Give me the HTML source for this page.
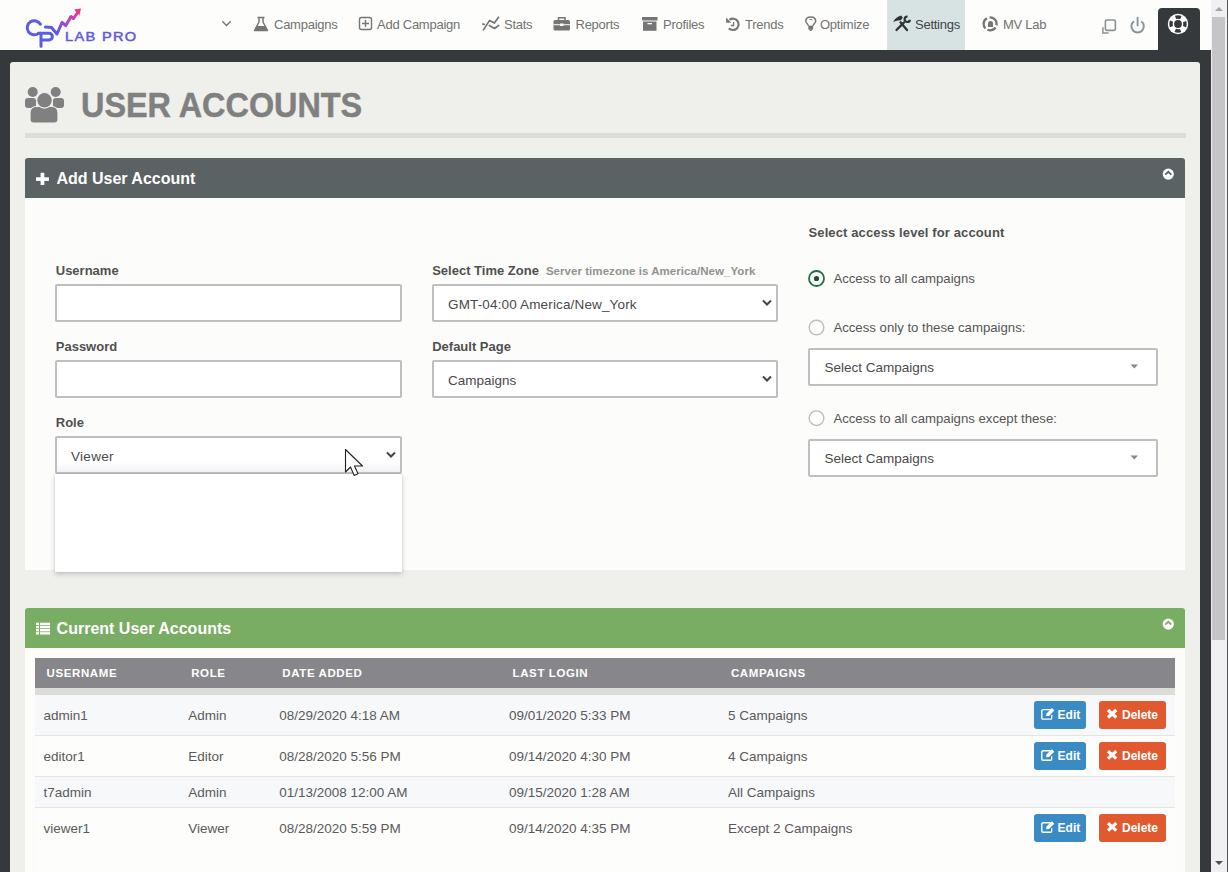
<!DOCTYPE html><html><head><meta charset="utf-8"><style>
*{box-sizing:border-box;margin:0;padding:0}
html,body{width:1228px;height:872px;overflow:hidden;background:#35393c;font-family:"Liberation Sans",sans-serif;position:relative}
.t{position:absolute;white-space:nowrap}
.b{position:absolute}
svg{position:absolute;overflow:visible}
</style></head><body>
<div class="b" style="left:0;top:0;width:1211px;height:50px;background:#fdfdfb"></div>
<div class="b" style="left:887px;top:0;width:78px;height:50px;background:#d7e3e3"></div>
<div class="b" style="left:1158px;top:8px;width:42px;height:50px;background:#35393c;border-radius:4px 4px 0 0"></div>
<div class="b" style="left:1211px;top:0;width:17px;height:872px;background:#f0f0f3;border-right:1px solid #5a5a5a"></div>
<div class="b" style="left:1212px;top:17px;width:13px;height:623px;background:#c5c5c7"></div>
<svg style="left:1210px;top:0" width="18" height="872"><path d="M5 11 L9 7 L13 11 Z" fill="#a3a3a3"/><path d="M5 861 L9 865 L13 861 Z" fill="#505050"/></svg>
<div class="b" style="left:10px;top:62px;width:1190px;height:830px;background:#eff0ec;border-radius:3px"></div>
<svg style="left:0;top:0" width="150" height="50">
<defs><linearGradient id="lg" x1="0" y1="1" x2="1" y2="0"><stop offset="0.25" stop-color="#5d5ae3"/><stop offset="0.55" stop-color="#a347d2"/><stop offset="1" stop-color="#f0368e"/></linearGradient></defs>
<path d="M40.4 24.3 A7.05 7.05 0 1 0 38.6 33.35" fill="none" stroke="#5d5ae3" stroke-width="3" stroke-linecap="round"/>
<path d="M38.6 33.2 L49 33.2 A3.4 3.4 0 0 1 49 40 L41 40 M41 33.2 L41 46.3" fill="none" stroke="#5d5ae3" stroke-width="3" stroke-linecap="round" stroke-linejoin="round"/>
<path d="M45.5 27 L51.5 27.5 L57 34 L62 22.5 L65.8 25.5 L71 16.5 L73.5 18.5 L78 12" fill="none" stroke="url(#lg)" stroke-width="3" stroke-linecap="round" stroke-linejoin="round"/>
<path d="M74 9.5 L81 8.5 L79.5 15.5 Z" fill="#f0368e"/>
</svg>
<div class="t " style="left:64.8px;top:29.10px;font-size:13px;line-height:16px;color:#5f5ae2;font-weight:normal;letter-spacing:1.2px;-webkit-text-stroke:0.5px #5f5ae2;transform:scaleX(1.12);transform-origin:0 0">LAB PRO</div>

<div class="t " style="left:274px;top:16.90px;font-size:13px;line-height:16px;color:#727272;font-weight:normal;letter-spacing:-0.25px">Campaigns</div>

<div class="t " style="left:377px;top:16.90px;font-size:13px;line-height:16px;color:#727272;font-weight:normal;letter-spacing:-0.25px">Add Campaign</div>

<div class="t " style="left:504px;top:16.90px;font-size:13px;line-height:16px;color:#727272;font-weight:normal;letter-spacing:-0.25px">Stats</div>

<div class="t " style="left:575.5px;top:16.90px;font-size:13px;line-height:16px;color:#727272;font-weight:normal;letter-spacing:-0.25px">Reports</div>

<div class="t " style="left:663px;top:16.90px;font-size:13px;line-height:16px;color:#727272;font-weight:normal;letter-spacing:-0.25px">Profiles</div>

<div class="t " style="left:745px;top:16.90px;font-size:13px;line-height:16px;color:#727272;font-weight:normal;letter-spacing:-0.25px">Trends</div>

<div class="t " style="left:820px;top:16.90px;font-size:13px;line-height:16px;color:#727272;font-weight:normal;letter-spacing:-0.25px">Optimize</div>

<div class="t " style="left:915px;top:16.90px;font-size:13px;line-height:16px;color:#3f4346;font-weight:normal;letter-spacing:-0.25px">Settings</div>

<div class="t " style="left:1003px;top:16.90px;font-size:13px;line-height:16px;color:#727272;font-weight:normal;letter-spacing:-0.25px">MV Lab</div>

<svg style="left:0;top:0" width="1210" height="50"><path d="M222.3 21.3 L226.5 25.5 L230.7 21.3" fill="none" stroke="#757575" stroke-width="1.4"/><path d="M257.5 17.5 L264.5 17.5 M259 17.5 L259 22 L254.5 30.5 L267.5 30.5 L263 22 L263 17.5" fill="none" stroke="#757575" stroke-width="1.5" stroke-linejoin="round"/><path d="M256.5 26 L265.5 26 L267.5 30.5 L254.5 30.5 Z" fill="#757575"/><rect x="359.5" y="17.5" width="12" height="12" rx="2" fill="none" stroke="#757575" stroke-width="1.4"/><path d="M365.5 20 L365.5 27 M362 23.5 L369 23.5" stroke="#757575" stroke-width="1.4"/><path d="M483.4 29.9 L489.6 20.4 L494.4 23 L498.5 17.2 M489.3 25.5 L494.5 28.5 L498.6 25.5 M482.8 24 L484.2 24.3" fill="none" stroke="#757575" stroke-width="1.7" stroke-linecap="round" stroke-linejoin="round"/><rect x="553.5" y="20" width="16.5" height="10.5" rx="1.5" fill="#757575"/><path d="M558.5 20 L558.5 17.8 L565 17.8 L565 20" fill="none" stroke="#757575" stroke-width="1.5"/><rect x="553.5" y="24.2" width="16.5" height="1" fill="#fdfdfb"/><rect x="560" y="23.5" width="3.5" height="2.5" fill="#fdfdfb"/><rect x="642" y="17" width="15.5" height="3.5" fill="#757575"/><rect x="643" y="21.5" width="13.5" height="9.3" fill="#757575"/><rect x="647.5" y="23" width="4.5" height="1.3" fill="#fdfdfb"/><path d="M729.5 19.8 A5.7 5.7 0 1 1 728.8 28.3" fill="none" stroke="#757575" stroke-width="2.1"/><path d="M726.1 17.6 L726.1 22.8 L731.2 22.8 Z" fill="#757575"/><path d="M733.6 22 L733.6 25.5 L730.8 25.5" fill="none" stroke="#757575" stroke-width="1.3"/><path d="M808.5 25.8 C808 24 805.8 22.5 805.8 21.2 C805.8 18.5 808 17 810.75 17 C813.5 17 815.7 18.5 815.7 21.2 C815.7 22.5 813.5 24 813 25.8" fill="none" stroke="#757575" stroke-width="1.5"/><rect x="808.3" y="25.6" width="4.9" height="4" fill="#757575"/><path d="M809.2 29.5 L812.3 29.5 L811.6 31 L809.9 31 Z" fill="#757575"/><path d="M809.5 19.6 Q811 19 812.3 20" fill="none" stroke="#757575" stroke-width="1"/><path d="M900.5 22.3 L907 30 M896.5 30 L903.8 22.6" fill="none" stroke="#2f3336" stroke-width="2.3" stroke-linecap="round"/><path d="M893.2 21.9 Q895.2 17.4 901.2 15.6 L902.8 17.6 L901 20.2 Q897 19.8 893.2 21.9 Z" fill="#2f3336"/><circle cx="907.3" cy="19.3" r="2.7" fill="none" stroke="#2f3336" stroke-width="2.2" pathLength="360" stroke-dasharray="265 95" stroke-dashoffset="350"/><circle cx="990.1" cy="23.8" r="6.5" fill="none" stroke="#757575" stroke-width="2.3" pathLength="360" stroke-dasharray="110 20 80 20 105 25" stroke-dashoffset="95"/><path d="M988 27 L988 23 Q988 21 990.5 21 Q993 21 993 23 L993 27 Z" fill="#757575"/><rect x="1105.4" y="20" width="10" height="10.4" rx="1.5" fill="none" stroke="#8c9095" stroke-width="1.6"/><path d="M1102.9 27.3 L1102.9 32.9 L1108.6 32.9" fill="none" stroke="#8c9095" stroke-width="1.5"/><path d="M1134 21.3 A6.2 6.2 0 1 0 1141.2 21.3" fill="none" stroke="#8a949c" stroke-width="2"/><path d="M1137.6 17.8 L1137.6 25.6" stroke="#8a949c" stroke-width="1.9" stroke-linecap="round"/><circle cx="1178" cy="24" r="10.2" fill="#fff"/><circle cx="1178" cy="24" r="3.9" fill="#35393c"/><circle cx="1178" cy="24" r="7" fill="none" stroke="#35393c" stroke-width="3.4" stroke-dasharray="5.5 5.5" stroke-dashoffset="2.75"/></svg>
<svg style="left:0;top:0" width="80" height="130" fill="#808080">
<circle cx="32.7" cy="92" r="5"/><circle cx="55.7" cy="92" r="5"/>
<rect x="25" y="98" width="11" height="10" rx="3"/><rect x="53" y="98" width="11" height="10" rx="3"/>
<path d="M30 120 L30 113 Q30 106.5 36.5 106.5 L51.5 106.5 Q58 106.5 58 113 L58 120 Q58 123 55 123 L33 123 Q30 123 30 120 Z" stroke="#eff0ec" stroke-width="1.2"/>
<circle cx="44.5" cy="100.3" r="7.8" stroke="#eff0ec" stroke-width="1.2"/>
</svg>
<div class="t " style="left:81px;top:85.07px;font-size:35px;line-height:40px;color:#808080;font-weight:bold;transform:scaleX(0.925);transform-origin:0 0;-webkit-text-stroke:0.5px #808080">USER ACCOUNTS</div>

<div class="b" style="left:25px;top:133px;width:1161px;height:5px;background:#dedcd9"></div>
<div class="b" style="left:25px;top:158px;width:1160px;height:40px;background:#5a6264;border-radius:3px 3px 0 0"></div>
<div class="b" style="left:25px;top:198px;width:1160px;height:372px;background:#fcfcfa"></div>
<svg style="left:0;top:0" width="60" height="200" fill="#fff"><rect x="40.6" y="172.8" width="3.7" height="12.2"/><rect x="36" y="177.3" width="12.9" height="3.6"/></svg>
<div class="t " style="left:56.4px;top:169.06px;font-size:16px;line-height:20px;color:#fff;font-weight:bold;">Add User Account</div>

<svg style="left:0;top:0" width="1228" height="872"><circle cx="1168.3" cy="174.1" r="5.6" fill="#fff"/><path d="M1165.3 174.7 L1168.3 171.79999999999998 L1171.3 174.7" fill="none" stroke="#5a6264" stroke-width="1.7"/></svg>
<div class="t " style="left:55.75px;top:262.50px;font-size:13px;line-height:16px;color:#505050;font-weight:bold;">Username</div>

<div class="t " style="left:55.75px;top:338.70px;font-size:13px;line-height:16px;color:#505050;font-weight:bold;">Password</div>

<div class="t " style="left:55.75px;top:415.00px;font-size:13px;line-height:16px;color:#505050;font-weight:bold;">Role</div>

<div class="t " style="left:432.2px;top:262.90px;font-size:13px;line-height:16px;color:#505050;font-weight:bold;">Select Time Zone</div>

<div class="t " style="left:545.9px;top:264.42px;font-size:11.5px;line-height:14px;color:#929292;font-weight:bold;letter-spacing:0.05px">Server timezone is America/New_York</div>

<div class="t " style="left:432.2px;top:338.50px;font-size:13px;line-height:16px;color:#505050;font-weight:bold;">Default Page</div>

<div class="t " style="left:808.5px;top:225.00px;font-size:13px;line-height:16px;color:#505050;font-weight:bold;letter-spacing:0.12px">Select access level for account</div>

<div class="b" style="left:55px;top:284px;width:347px;height:38px;border:2px solid #bfbec1;border-radius:2px;background:#fff"></div>
<div class="b" style="left:55px;top:360px;width:347px;height:38px;border:2px solid #bfbec1;border-radius:2px;background:#fff"></div>
<div class="b" style="left:55px;top:436px;width:347px;height:38px;border:2px solid #bfbec1;border-radius:2px;background:linear-gradient(#fff 70%,#f1f2f5)"></div>
<div class="b" style="left:432px;top:284px;width:346px;height:38px;border:2px solid #bfbec1;border-radius:2px;background:#fff"></div>
<div class="b" style="left:432px;top:360px;width:346px;height:38px;border:2px solid #bfbec1;border-radius:2px;background:#fff"></div>
<div class="b" style="left:808px;top:348px;width:350px;height:38px;border:2px solid #bfbec1;border-radius:2px;background:#fff"></div>
<div class="b" style="left:808px;top:439px;width:350px;height:38px;border:2px solid #bfbec1;border-radius:2px;background:#fff"></div>
<div class="b" style="left:55px;top:474px;width:347px;height:98px;background:#fff;box-shadow:0 2px 5px rgba(0,0,0,0.2),0 0 1px rgba(0,0,0,0.15)"></div>
<div class="t " style="left:71px;top:447.82px;font-size:13.5px;line-height:17px;color:#4a4a4a;font-weight:normal;letter-spacing:0.3px">Viewer</div>

<div class="t " style="left:448px;top:296.22px;font-size:13.5px;line-height:17px;color:#4a4a4a;font-weight:normal;letter-spacing:0.15px">GMT-04:00 America/New_York</div>

<div class="t " style="left:448px;top:371.82px;font-size:13.5px;line-height:17px;color:#4a4a4a;font-weight:normal;">Campaigns</div>

<div class="t " style="left:824.5px;top:358.52px;font-size:13.5px;line-height:17px;color:#4a4a4a;font-weight:normal;">Select Campaigns</div>

<div class="t " style="left:824.5px;top:449.82px;font-size:13.5px;line-height:17px;color:#4a4a4a;font-weight:normal;">Select Campaigns</div>

<div class="t " style="left:833.4px;top:271.33px;font-size:13.2px;line-height:16px;color:#555;font-weight:normal;">Access to all campaigns</div>

<div class="t " style="left:833.4px;top:319.83px;font-size:13.2px;line-height:16px;color:#555;font-weight:normal;">Access only to these campaigns:</div>

<div class="t " style="left:833.4px;top:411.33px;font-size:13.2px;line-height:16px;color:#555;font-weight:normal;">Access to all campaigns except these:</div>

<svg style="left:0;top:0" width="1228" height="872"><path d="M387 452.5 L391 456.5 L395 452.5" fill="none" stroke="#444" stroke-width="2"/><path d="M763 300.5 L767 304.5 L771 300.5" fill="none" stroke="#444" stroke-width="2"/><path d="M763 376.5 L767 380.5 L771 376.5" fill="none" stroke="#444" stroke-width="2"/><path d="M1130.5 364.5 L1138 364.5 L1134.25 368.5 Z" fill="#888"/><path d="M1130.5 455.5 L1138 455.5 L1134.25 459.5 Z" fill="#888"/><circle cx="816.5" cy="278.5" r="7.5" fill="#fff" stroke="#1f7040" stroke-width="1.8"/><circle cx="816.5" cy="278.5" r="2.6" fill="#1d4d35"/><circle cx="816.5" cy="327.5" r="7.3" fill="#fff" stroke="#bdbdbd" stroke-width="1.4"/><circle cx="816.5" cy="418.2" r="7.3" fill="#fff" stroke="#bdbdbd" stroke-width="1.4"/><path d="M345.5 449.5 L345.5 472 L350.5 467 L354.2 475.5 L358 473.8 L354.5 466 L362.5 466 Z" fill="#fff" stroke="#222" stroke-width="1.1" stroke-linejoin="round"/></svg>
<div class="b" style="left:25px;top:608px;width:1160px;height:40px;background:#7aad64;border-radius:3px 3px 0 0"></div>
<div class="b" style="left:25px;top:648px;width:1160px;height:240px;background:#fcfcfa"></div>
<svg style="left:0;top:0" width="60" height="660" fill="#fff"><rect x="36" y="622.70" width="3" height="2.4"/><rect x="40" y="622.70" width="10" height="2.4"/><rect x="36" y="625.85" width="3" height="2.4"/><rect x="40" y="625.85" width="10" height="2.4"/><rect x="36" y="629.00" width="3" height="2.4"/><rect x="40" y="629.00" width="10" height="2.4"/><rect x="36" y="632.15" width="3" height="2.4"/><rect x="40" y="632.15" width="10" height="2.4"/></svg>
<div class="t " style="left:56.6px;top:619.06px;font-size:16px;line-height:20px;color:#fff;font-weight:bold;">Current User Accounts</div>

<svg style="left:0;top:0" width="1228" height="872"><circle cx="1168.3" cy="624.1" r="5.6" fill="#fff"/><path d="M1165.3 624.7 L1168.3 621.8000000000001 L1171.3 624.7" fill="none" stroke="#7aad64" stroke-width="1.7"/></svg>
<div class="b" style="left:35px;top:658px;width:1140px;height:30px;background:#87878b"></div>
<div class="b" style="left:35px;top:688px;width:1140px;height:7px;background:#dcdcd9"></div>
<div class="t " style="left:46.6px;top:666.22px;font-size:11.5px;line-height:14px;color:#fff;font-weight:bold;letter-spacing:0.6px">USERNAME</div>

<div class="t " style="left:191.2px;top:666.22px;font-size:11.5px;line-height:14px;color:#fff;font-weight:bold;letter-spacing:0.6px">ROLE</div>

<div class="t " style="left:282.3px;top:666.22px;font-size:11.5px;line-height:14px;color:#fff;font-weight:bold;letter-spacing:0.6px">DATE ADDED</div>

<div class="t " style="left:512.6px;top:666.22px;font-size:11.5px;line-height:14px;color:#fff;font-weight:bold;letter-spacing:0.6px">LAST LOGIN</div>

<div class="t " style="left:730.9px;top:666.22px;font-size:11.5px;line-height:14px;color:#fff;font-weight:bold;letter-spacing:0.6px">CAMPAIGNS</div>

<div class="b" style="left:35px;top:695px;width:1140px;height:40px;background:#f7f8fa"></div>
<div class="b" style="left:35px;top:735px;width:1140px;height:1px;background:#e4e4e4"></div>
<div class="t " style="left:43.4px;top:706.92px;font-size:13.5px;line-height:17px;color:#5a5a5a;font-weight:normal;">admin1</div>

<div class="t " style="left:188.3px;top:706.92px;font-size:13.5px;line-height:17px;color:#5a5a5a;font-weight:normal;">Admin</div>

<div class="t " style="left:279.2px;top:706.92px;font-size:13.5px;line-height:17px;color:#5a5a5a;font-weight:normal;">08/29/2020 4:18 AM</div>

<div class="t " style="left:509px;top:706.92px;font-size:13.5px;line-height:17px;color:#5a5a5a;font-weight:normal;">09/01/2020 5:33 PM</div>

<div class="t " style="left:728px;top:706.92px;font-size:13.5px;line-height:17px;color:#5a5a5a;font-weight:normal;">5 Campaigns</div>

<div class="b" style="left:1034px;top:701.1px;width:52px;height:28px;background:#3a8ac4;border-radius:3px"></div>
<div class="b" style="left:1099px;top:701.1px;width:67px;height:28px;background:#e1592f;border-radius:3px"></div>
<div class="t " style="left:1057.6px;top:707.64px;font-size:12px;line-height:15px;color:#fff;font-weight:bold;">Edit</div>

<div class="t " style="left:1122px;top:707.64px;font-size:12px;line-height:15px;color:#fff;font-weight:bold;">Delete</div>

<svg style="left:0;top:0" width="1228" height="872"><path d="M1050.5 709.6 L1043 709.6 Q1041.8 709.6 1041.8 710.8000000000001 L1041.8 717.9 Q1041.8 719.1 1043 719.1 L1050.5 719.1 Q1051.7 719.1 1051.7 717.9 L1051.7 715.1" fill="none" stroke="#fff" stroke-width="1.4"/><path d="M1046 716.1 L1046.5 713.4 L1051.8 708.1 L1054.3 710.6 L1049 715.9 Z" fill="#fff"/><path d="M1108 710.0 L1116.3 717.5 M1116.3 710.0 L1108 717.5" stroke="#fff" stroke-width="3.3"/></svg>
<div class="b" style="left:35px;top:736px;width:1140px;height:40px;background:#fdfdfc"></div>
<div class="b" style="left:35px;top:776px;width:1140px;height:1px;background:#e4e4e4"></div>
<div class="t " style="left:43.4px;top:748.02px;font-size:13.5px;line-height:17px;color:#5a5a5a;font-weight:normal;">editor1</div>

<div class="t " style="left:188.3px;top:748.02px;font-size:13.5px;line-height:17px;color:#5a5a5a;font-weight:normal;">Editor</div>

<div class="t " style="left:279.2px;top:748.02px;font-size:13.5px;line-height:17px;color:#5a5a5a;font-weight:normal;">08/28/2020 5:56 PM</div>

<div class="t " style="left:509px;top:748.02px;font-size:13.5px;line-height:17px;color:#5a5a5a;font-weight:normal;">09/14/2020 4:30 PM</div>

<div class="t " style="left:728px;top:748.02px;font-size:13.5px;line-height:17px;color:#5a5a5a;font-weight:normal;">4 Campaigns</div>

<div class="b" style="left:1034px;top:742.2px;width:52px;height:28px;background:#3a8ac4;border-radius:3px"></div>
<div class="b" style="left:1099px;top:742.2px;width:67px;height:28px;background:#e1592f;border-radius:3px"></div>
<div class="t " style="left:1057.6px;top:748.74px;font-size:12px;line-height:15px;color:#fff;font-weight:bold;">Edit</div>

<div class="t " style="left:1122px;top:748.74px;font-size:12px;line-height:15px;color:#fff;font-weight:bold;">Delete</div>

<svg style="left:0;top:0" width="1228" height="872"><path d="M1050.5 750.7 L1043 750.7 Q1041.8 750.7 1041.8 751.9000000000001 L1041.8 759.0 Q1041.8 760.2 1043 760.2 L1050.5 760.2 Q1051.7 760.2 1051.7 759.0 L1051.7 756.2" fill="none" stroke="#fff" stroke-width="1.4"/><path d="M1046 757.2 L1046.5 754.5 L1051.8 749.2 L1054.3 751.7 L1049 757.0 Z" fill="#fff"/><path d="M1108 751.1 L1116.3 758.6 M1116.3 751.1 L1108 758.6" stroke="#fff" stroke-width="3.3"/></svg>
<div class="b" style="left:35px;top:777px;width:1140px;height:30px;background:#f7f8fa"></div>
<div class="b" style="left:35px;top:807px;width:1140px;height:1px;background:#e4e4e4"></div>
<div class="t " style="left:43.4px;top:783.82px;font-size:13.5px;line-height:17px;color:#5a5a5a;font-weight:normal;">t7admin</div>

<div class="t " style="left:188.3px;top:783.82px;font-size:13.5px;line-height:17px;color:#5a5a5a;font-weight:normal;">Admin</div>

<div class="t " style="left:279.2px;top:783.82px;font-size:13.5px;line-height:17px;color:#5a5a5a;font-weight:normal;">01/13/2008 12:00 AM</div>

<div class="t " style="left:509px;top:783.82px;font-size:13.5px;line-height:17px;color:#5a5a5a;font-weight:normal;">09/15/2020 1:28 AM</div>

<div class="t " style="left:728px;top:783.82px;font-size:13.5px;line-height:17px;color:#5a5a5a;font-weight:normal;">All Campaigns</div>

<div class="b" style="left:35px;top:808px;width:1140px;height:64px;background:#fdfdfc"></div>
<div class="t " style="left:43.4px;top:820.02px;font-size:13.5px;line-height:17px;color:#5a5a5a;font-weight:normal;">viewer1</div>

<div class="t " style="left:188.3px;top:820.02px;font-size:13.5px;line-height:17px;color:#5a5a5a;font-weight:normal;">Viewer</div>

<div class="t " style="left:279.2px;top:820.02px;font-size:13.5px;line-height:17px;color:#5a5a5a;font-weight:normal;">08/28/2020 5:59 PM</div>

<div class="t " style="left:509px;top:820.02px;font-size:13.5px;line-height:17px;color:#5a5a5a;font-weight:normal;">09/14/2020 4:35 PM</div>

<div class="t " style="left:728px;top:820.02px;font-size:13.5px;line-height:17px;color:#5a5a5a;font-weight:normal;">Except 2 Campaigns</div>

<div class="b" style="left:1034px;top:814.2px;width:52px;height:28px;background:#3a8ac4;border-radius:3px"></div>
<div class="b" style="left:1099px;top:814.2px;width:67px;height:28px;background:#e1592f;border-radius:3px"></div>
<div class="t " style="left:1057.6px;top:820.74px;font-size:12px;line-height:15px;color:#fff;font-weight:bold;">Edit</div>

<div class="t " style="left:1122px;top:820.74px;font-size:12px;line-height:15px;color:#fff;font-weight:bold;">Delete</div>

<svg style="left:0;top:0" width="1228" height="872"><path d="M1050.5 822.7 L1043 822.7 Q1041.8 822.7 1041.8 823.9000000000001 L1041.8 831.0 Q1041.8 832.2 1043 832.2 L1050.5 832.2 Q1051.7 832.2 1051.7 831.0 L1051.7 828.2" fill="none" stroke="#fff" stroke-width="1.4"/><path d="M1046 829.2 L1046.5 826.5 L1051.8 821.2 L1054.3 823.7 L1049 829.0 Z" fill="#fff"/><path d="M1108 823.1 L1116.3 830.6 M1116.3 823.1 L1108 830.6" stroke="#fff" stroke-width="3.3"/></svg>
</body></html>
